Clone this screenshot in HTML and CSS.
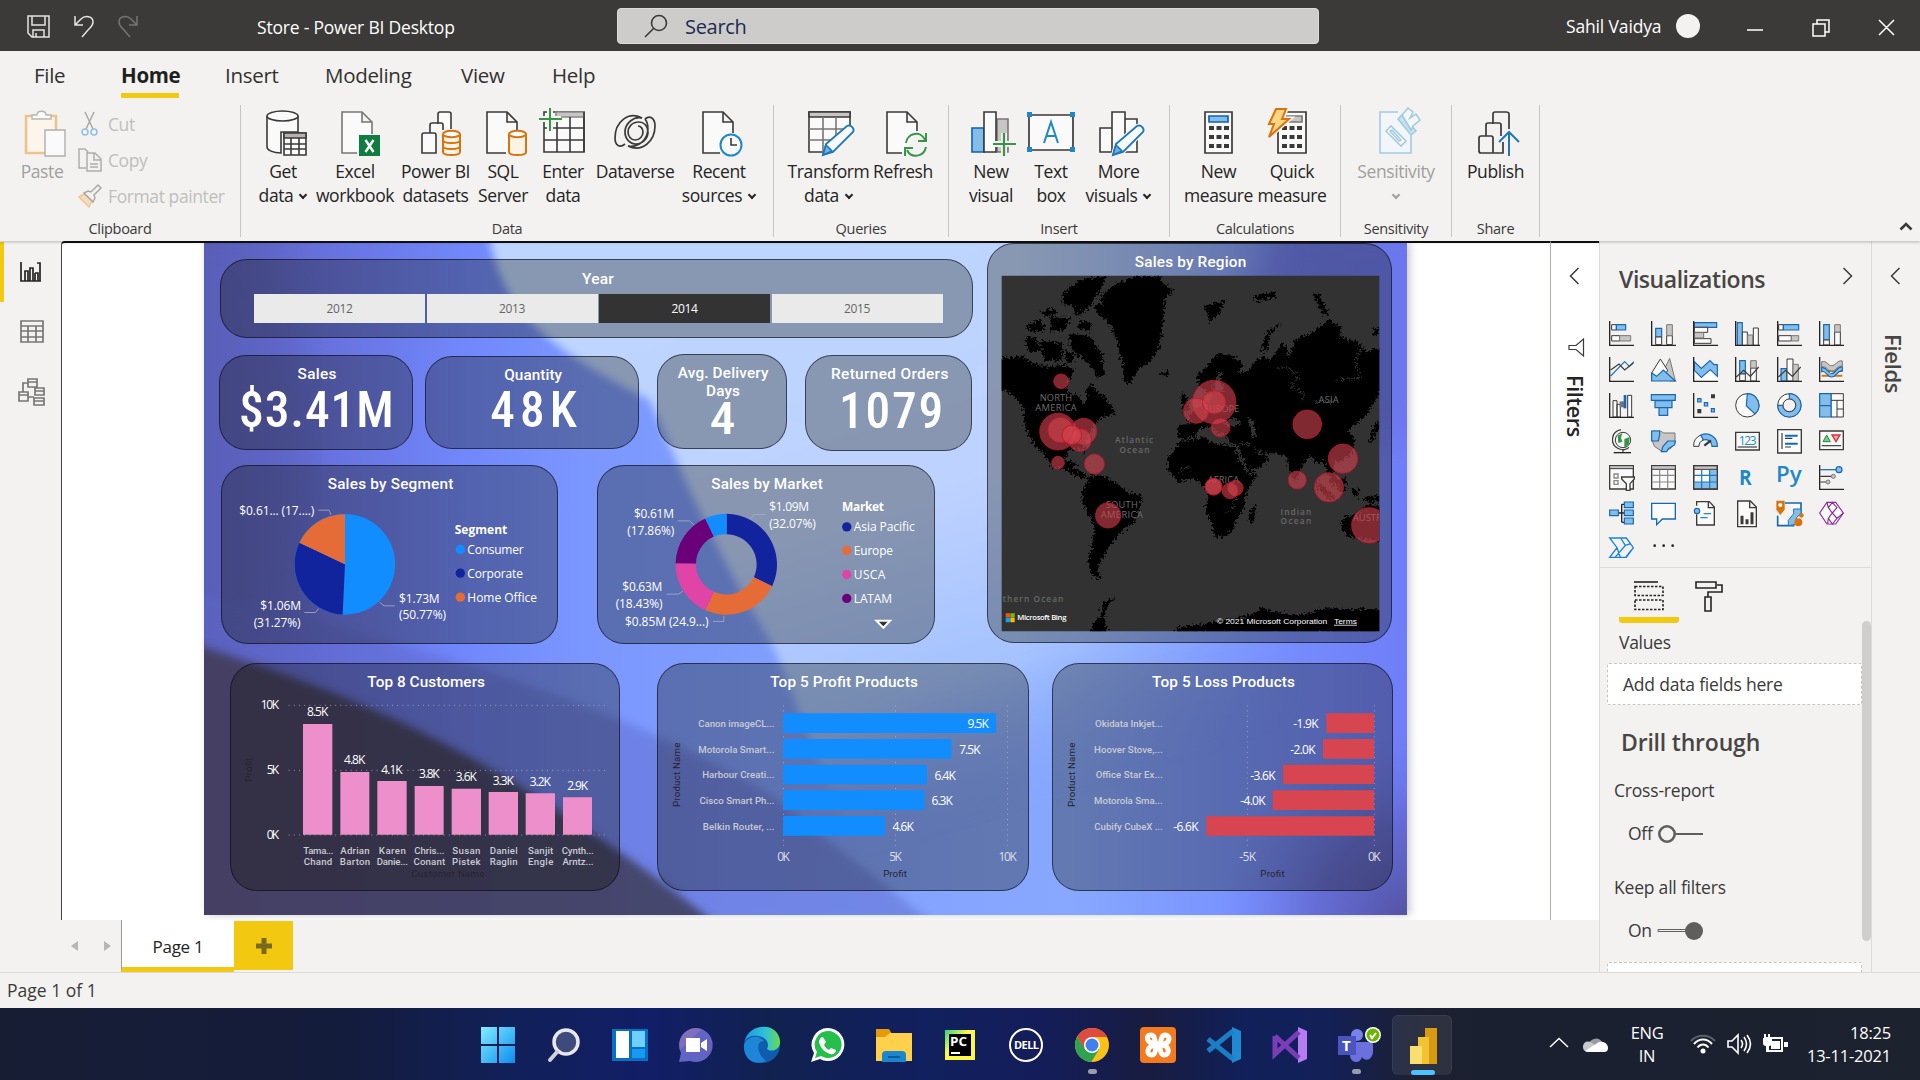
FILE: index.html
```html
<!DOCTYPE html>
<html lang="en">
<head>
<meta charset="utf-8">
<title>Store - Power BI Desktop</title>
<link rel="stylesheet" href="styles.css">
</head>
<body>
<div class="app">

<header class="titlebar">
  <svg class="quick" width="120" height="24" viewBox="0 0 120 24" fill="none" stroke="#e6e4e2" stroke-width="1.5">
    <path d="M1 1h21v21H5l-4-4zM5 1v9h13V1M6 22v-7h11v7M9 22v-4"/>
    <path d="M48 1v9h8M48 10l6-6c4-4 12-3 12 3 0 4-2 5-5 8l-6 7"/>
    <path stroke="#777573" d="M110 1v9h-8M110 10l-6-6c-4-4-12-3-12 3 0 4 2 5 5 8l6 7"/>
  </svg>
  <div class="doc-name">Store - Power BI Desktop</div>
  <div class="search">
    <svg width="24" height="24" viewBox="0 0 24 24" fill="none" stroke="#3b3a39" stroke-width="1.6"><circle cx="15" cy="9" r="7.5"/><path d="M9.5 14.5L1 23"/></svg>
    <span>Search</span>
  </div>
  <div class="user">Sahil Vaidya</div>
  <span class="avatar"></span>
  <svg class="winbtns" width="150" height="18" viewBox="0 0 150 18" fill="none" stroke="#fff" stroke-width="1.5"><path d="M1 11h16M67 5h12v12H67zM71 5V1h12v12h-4M133 1l15 15M148 1l-15 15"/></svg>
</header>

<nav class="tabs">
  <span class="t-file">File</span><span class="t-home">Home</span><span class="t-insert">Insert</span><span class="t-model">Modeling</span><span class="t-view">View</span><span class="t-help">Help</span>
</nav>

<section class="ribbon">
  <div class="group g-clip">
    <div class="btns">
      <div class="btn dim"><svg class="ico" viewBox="0 0 48 48" fill="#fafafa" stroke-width="1.4"><path stroke="#eec28e" stroke-width="2.6" fill="#fbf5ec" d="M8 8h30v37H8z"/><path stroke="#b8b6b4" d="M14 11V7h5c0-5 9-5 9 0h5v4z"/><path stroke="#b0aeac" d="M27 22h20v26H27z"/></svg>
        <span>Paste</span></div>
      <div class="cliplist">
        <div><svg width="26" height="26" viewBox="0 0 26 26" fill="none" stroke="#aaa8a6" stroke-width="1.5"><path d="M8 1l8 17M17 1L9 18"/><circle cx="8" cy="21" r="3" stroke="#8fc0e0"/><circle cx="17" cy="21" r="3" stroke="#8fc0e0"/></svg><span>Cut</span></div>
        <div><svg width="26" height="26" viewBox="0 0 26 26" fill="none" stroke="#b0aeac" stroke-width="1.5"><path d="M9 21H2V2h6l3 3M10 6h8l6 6v12H10zM17 6v7h7M13 17h8M13 20h8"/></svg><span>Copy</span></div>
        <div><svg width="26" height="26" viewBox="0 0 26 26" fill="none" stroke="#aaa8a6" stroke-width="1.5"><path fill="#f6dcbc" stroke="#efc797" d="M2 14l10 10 3-6-8-7z"/><path d="M7 10l9 9 2-4-1-3 7-7-3-3-7 7-3-1z"/></svg><span>Format painter</span></div>
      </div>
    </div>
    <div class="glabel">Clipboard</div>
  </div>

  <div class="group g-data">
    <div class="btns">
      <div class="btn"><svg class="ico" viewBox="0 0 48 48" fill="#fafafa" stroke="#3b3a39" stroke-width="1.6"><path d="M8 8v31c0 3 6 6 14 6V24h17V8"/><ellipse cx="23.500" cy="8" rx="15.500" ry="5"/><path d="M25 25h22v22H25z"/><path fill="#b5b3b1" d="M25 25h22v5H25z"/><path d="M25 36h22M25 41h22M32 30v17M40 30v17"/></svg><span>Get</span><span>data<i class="dd"></i></span></div>
      <div class="btn"><svg class="ico" viewBox="0 0 48 48" fill="#fafafa" stroke="#797775" stroke-width="1.6"><path d="M26 45H11V4h20l10 10v12M31 4v10h10"/><path stroke="none" fill="#107c41" d="M28 27h21v21H28z"/><path stroke="#fff" stroke-width="2.400" d="M34.500 32l8 12M42.500 32l-8 12"/></svg><span>Excel</span><span>workbook</span></div>
      <div class="btn"><svg class="ico" viewBox="0 0 48 48" fill="#fafafa" stroke="#3b3a39" stroke-width="1.600"><path d="M26 16V6q0-2 2-2h9q2 0 2 2v15M18 25V17q0-2 2-2h9q2 0 2 2v5M10 45V27q0-2 2-2h10q2 0 2 2v18z"/><path fill="#fdf3e6" stroke="#d9730d" stroke-width="2" d="M31 26v18c0 4 17 4 17 0V26"/><ellipse fill="#fff" stroke="#d9730d" stroke-width="2" cx="39.500" cy="26" rx="8.500" ry="3.200"/><path fill="none" stroke="#d9730d" stroke-width="2" d="M31 32c0 4 17 4 17 0M31 38c0 4 17 4 17 0"/></svg><span>Power BI</span><span>datasets</span></div>
      <div class="btn"><svg class="ico" viewBox="0 0 48 48" fill="#fafafa" stroke="#3b3a39" stroke-width="1.6"><path d="M27 45H8V4h20l10 10v8M28 4v10h10"/><path fill="#fdf3e6" stroke="#d9730d" stroke-width="2" d="M30 26v18c0 4 17 4 17 0V26"/><ellipse fill="#fff" stroke="#d9730d" stroke-width="2" cx="38.5" cy="26" rx="8.5" ry="3.200"/></svg><span>SQL</span><span>Server</span></div>
      <div class="btn"><svg class="ico" viewBox="0 0 48 48" fill="#fafafa" stroke="#3b3a39" stroke-width="1.6"><path d="M5 4h40v40H5z"/><path fill="#c8c6c4" stroke="#8a8886" d="M17 4h28v5H17z"/><path d="M5 20h40M5 32h40M18 9v35M31 9v35M45 4v40"/><path stroke="#f3f2f1" stroke-width="6" d="M11 0v23M0 11h22"/><path stroke="#359647" stroke-width="2" d="M11 0v23M0 11h23"/></svg><span>Enter</span><span>data</span></div>
      <div class="btn"><svg class="ico" viewBox="0 0 48 48" fill="none" stroke="#3b3a39" stroke-width="1.700"><path d="M31 10C17 3 4 14 4 30c0 8 5 10 10 6M17 38c14 7 27-5 27-20 0-8-5-11-10-7"/><path d="M31 10c-9-2-17 6-17 14 0 7 5 12 11 12 7 0 12-6 12-12 0-6-4-10-9-10-7 0-11 5-11 10 0 4 3 8 7 8 5 0 8-4 8-8 0-3-2-6-5-6M34 11c4 5 4 15-1 21-4 5-10 7-16 6"/></svg><span>Dataverse</span></div>
      <div class="btn"><svg class="ico" viewBox="0 0 48 48" fill="#fafafa" stroke="#3b3a39" stroke-width="1.6"><path d="M25 45H8V4h20l10 10v11M28 4v10h10"/><circle cx="36" cy="37" r="10.500" stroke="#1e88c9" stroke-width="2"/><path fill="none" d="M36 30v7h6"/></svg><span>Recent</span><span>sources<i class="dd"></i></span></div>
    </div>
    <div class="glabel">Data</div>
  </div>

  <div class="group g-query">
    <div class="btns">
      <div class="btn"><svg class="ico" viewBox="0 0 48 48" fill="#fafafa" stroke="#3b3a39" stroke-width="1.6"><path d="M20 44H4V4h41v16"/><path fill="#c8c6c4" d="M4 4h41v5H4z"/><path stroke="#797775" d="M4 21h36M4 32h24M18 9v35M31 9v18"/><path fill="#f7fbff" stroke="#1e78b8" stroke-width="1.800" d="M18 47l3-11 21-18c4-2 8 3 6 6L28 44z"/><path fill="#6db3ea" stroke="#1e78b8" d="M18 47l3-10 6 6z"/></svg><span>Transform</span><span>data<i class="dd"></i></span></div>
      <div class="btn"><svg class="ico" viewBox="0 0 48 48" fill="#fafafa" stroke="#3b3a39" stroke-width="1.6"><path d="M23 45H8V4h20l10 10v9M28 4v10h10"/><path fill="none" stroke="#359647" stroke-width="2" d="M27 35c1-10 15-13 19-3M47 25v8h-8M47 39c-2 10-15 12-19 3M26 48v-8h8"/></svg><span>Refresh</span></div>
    </div>
    <div class="glabel">Queries</div>
  </div>

  <div class="group g-insert">
    <div class="btns">
      <div class="btn"><svg class="ico" viewBox="0 0 48 48" fill="#fafafa" stroke="#3b3a39" stroke-width="1.6"><path fill="#c8c6c4" stroke="#797775" d="M30 11h11v33H30z"/><path fill="#83bdec" stroke="#0f62b0" d="M5 20h12v24H5z"/><path d="M17 4h12v40H17z"/><path stroke="#f3f2f1" stroke-width="6" d="M37 25v23M26 36h22"/><path stroke="#359647" stroke-width="2.200" d="M37 25v23M26 36h23"/></svg><span>New</span><span>visual</span></div>
      <div class="btn"><svg class="ico" viewBox="0 0 48 48" fill="#fafafa" stroke="#3b3a39" stroke-width="1.7"><path d="M2 7h44v35H2z"/><path fill="none" stroke="#1e88c9" stroke-width="2" d="M17 35l7-21 7 21M19.500 28h9"/><path stroke="none" fill="#1e88c9" d="M0 4h5v5H0zM43 4h5v5h-5zM0 39h5v5H0zM43 39h5v5h-5z"/></svg><span>Text</span><span>box</span></div>
      <div class="btn"><svg class="ico" viewBox="0 0 48 48" fill="#fafafa" stroke="#3b3a39" stroke-width="1.6"><path d="M5 20h12v24H5zM30 11h12v33H30zM17 4h13v40H17z"/><path fill="#f7fbff" stroke="#f3f2f1" stroke-width="4" d="M18 47l3-11 21-18c4-2 8 3 6 6L28 44z"/><path fill="#f7fbff" stroke="#1e78b8" stroke-width="1.8" d="M18 47l3-11 21-18c4-2 8 3 6 6L28 44z"/><path fill="#6db3ea" stroke="#1e78b8" d="M18 47l3-10 6 6z"/></svg><span>More</span><span>visuals<i class="dd"></i></span></div>
    </div>
    <div class="glabel">Insert</div>
  </div>

  <div class="group g-calc">
    <div class="btns">
      <div class="btn"><svg class="ico" viewBox="0 0 48 48" fill="#fafafa" stroke="#3b3a39" stroke-width="1.7"><path d="M10 4h27v41H10z"/><path fill="#83bdec" stroke="#0f62b0" d="M14 8h19v6H14z"/><path stroke-width="4" d="M14 20h5M21.500 20h5M29 20h5M14 29h5M21.5 29h5M29 29h5M14 38h5M21.500 38h5M29 38h5"/></svg><span>New</span><span>measure</span></div>
      <div class="btn"><svg class="ico" viewBox="0 0 48 48" fill="#fafafa" stroke="#3b3a39" stroke-width="1.7"><path d="M10 4h28v41H10z"/><path fill="#c8c6c4" stroke="#797775" d="M16 8h18v6H16z"/><path stroke-width="4" d="M14 20h5M21.500 20h5M29 20h5M14 29h5M21.500 29h5M29 29h5M14 38h5M21.500 38h5M29 38h5"/><path stroke="#f3f2f1" stroke-width="5" d="M8 1h10l-4 10h7L1 29l5-13H1z"/><path fill="#fcd683" stroke="#d9730d" stroke-width="2" d="M8 1h10l-4 10h7L1 29l5-13H1z"/></svg><span>Quick</span><span>measure</span></div>
    </div>
    <div class="glabel">Calculations</div>
  </div>

  <div class="group g-sens">
    <div class="btns">
      <div class="btn dim"><svg class="ico" viewBox="0 0 48 48" fill="#f3f6f8" stroke="#a3cbe2" stroke-width="1.6"><path d="M26 4H8v41h31V27"/><path fill="#fff" d="M14 23l5-5 15 15-5 5zM18 23l2-1 9 10-2 1z"/><path fill="#c9e0ee" d="M26 11l4-4 14 16-5 4z"/><path d="M30 7l6-7 5 4-3 6 6-4 4 6-7 6-2 4z"/></svg><span>Sensitivity</span><span><i class="dd"></i></span></div>
    </div>
    <div class="glabel">Sensitivity</div>
  </div>

  <div class="group g-share">
    <div class="btns">
      <div class="btn"><svg class="ico" viewBox="0 0 48 48" fill="none" stroke="#3b3a39" stroke-width="1.7"><path d="M22 16V6q0-2 2-2h11q3 0 3 2v15M15 28V17q0-2 2-2h11q2 0 2 2v11M22 45H10q-2 0-2-2V30q0-2 2-2h10q2 0 2 2v15h10V34"/><path stroke="#1e78b8" stroke-width="2" d="M38 48V25M28 34l10-10 10 10"/></svg><span>Publish</span></div>
    </div>
    <div class="glabel">Share</div>
  </div>
  <svg class="collapse" width="14" height="9" viewBox="0 0 14 9" fill="none" stroke="#3b3a39" stroke-width="2.600"><path d="M1.500 7.500L7 2l5.500 5.500"/></svg>
</section>

<main class="work">
  <aside class="rail">
    <div class="on"><svg width="24" height="24" viewBox="0 0 24 24" fill="none" stroke="#252423" stroke-width="1.700"><path d="M2 2v19h20M6 21V11h3v10M11 21V8h3v13M16 21V13M16 13h3v8M18 3h3v18"/></svg></div>
    <div><svg width="24" height="24" viewBox="0 0 24 24" fill="none" stroke="#797775" stroke-width="1.700"><path d="M1 1h22v21H1zM1 6h22M1 11h22M1 17h22M8 6v16M16 6v16"/></svg></div>
    <div><svg width="28" height="28" viewBox="0 0 28 28" fill="none" stroke="#797775" stroke-width="1.700"><path d="M10 1h9v8h-9zM10 4h9M1 14h9v9H1zM1 17h9M17 10h9v7h-9zM17 13h9M16 20h10v7H16zM16 23h10M10 5H5v9M10 19h6"/></svg></div>
  </aside>

  <section class="stage">
    <div class="report">
      <svg class="wall" viewBox="204 243 1203 671" preserveAspectRatio="none">
        <defs>
          <linearGradient id="base"><stop offset="0" stop-color="#595db4"/><stop offset=".1" stop-color="#6771de"/><stop offset=".22" stop-color="#7188fc"/><stop offset=".32" stop-color="#7b97ff"/><stop offset=".5" stop-color="#80a0ff"/><stop offset=".72" stop-color="#88a8ff"/><stop offset=".86" stop-color="#7892ff"/><stop offset="1" stop-color="#6f7ef8"/></linearGradient>
          <linearGradient id="sky" x1="0" y1="0" x2=".35" y2="1"><stop offset="0" stop-color="#bdd6ff"/><stop offset=".5" stop-color="#bed2ff"/><stop offset=".76" stop-color="#a4c2ff"/><stop offset=".95" stop-color="#86a6ff" stop-opacity="0"/></linearGradient>
          <linearGradient id="fade"><stop offset="0" stop-color="#fff"/><stop offset=".66" stop-color="#fff"/><stop offset="1" stop-color="#000"/></linearGradient>
          <mask id="m"><path fill="url(#fade)" d="M450 200h860v780H450z"/></mask>
          <linearGradient id="dusk"><stop offset="0" stop-color="#443f63"/><stop offset="1" stop-color="#45476f"/></linearGradient>
          <radialGradient id="corner" cx="1410" cy="920" r="190" gradientUnits="userSpaceOnUse"><stop offset="0" stop-color="#5353a0"/><stop offset=".5" stop-color="#5f61c4" stop-opacity=".7"/><stop offset="1" stop-color="#6b77e8" stop-opacity="0"/></radialGradient>
          <filter id="soft"><feGaussianBlur stdDeviation="4"/></filter>
          <filter id="softer"><feGaussianBlur stdDeviation="18"/></filter>
        </defs>
        <path fill="url(#base)" d="M204 243h1203v671H204z"/>
        <g mask="url(#m)"><path fill="url(#sky)" filter="url(#soft)" d="M488 230C500 300 530 340 650 400C680 470 720 560 770 640C800 700 820 790 900 920L1300 920L1300 230Z"/></g>
        <path fill="#6a74e8" opacity=".75" filter="url(#softer)" d="M1275 220C1250 290 1230 360 1300 440L1430 440L1430 220Z"/>
        <path fill="#5a60bc" opacity=".45" filter="url(#softer)" d="M190 230L250 230C310 330 320 430 300 640L190 640Z"/>
        <path fill="#5d66c8" opacity=".45" filter="url(#soft)" d="M190 590C400 640 620 700 780 800C840 850 880 880 930 920L190 920Z"/>
        <path fill="url(#dusk)" filter="url(#soft)" d="M190 642C330 686 420 725 520 785C590 830 650 870 715 922L190 922Z"/>
        <path fill="url(#corner)" d="M1200 700h207v214h-207z"/>
      </svg>

      <div class="upper">
        <div class="left">
          <div class="card year">
            <h3>Year</h3>
            <div class="slicer"><span>2012</span><span>2013</span><span class="sel">2014</span><span>2015</span></div>
          </div>
          <div class="kpis">
            <div class="card k1"><svg viewBox="58 346 580 284"><text class="ttl" x="293" y="419" textLength="116">Sales</text><text class="big" x="118" y="560" textLength="462">$3.41M</text></svg></div>
            <div class="card k2"><svg viewBox="673 351 643 277"><text class="ttl" x="911" y="423" textLength="174">Quantity</text><text class="big" x="869" y="563" textLength="260">48K</text></svg></div>
            <div class="card k3"><svg viewBox="202 343 390 286"><text class="ttl" x="264" y="414" textLength="273">Avg. Delivery</text><text class="ttl" x="349" y="468" textLength="102">Days</text><text class="big sm" x="360" y="585" textLength="77" lengthAdjust="spacingAndGlyphs">4</text></svg></div>
            <div class="card k4"><svg viewBox="646 346 500 287"><text class="ttl" x="724" y="417" textLength="351">Returned Orders</text><text class="big" x="748" y="563" textLength="312">1079</text></svg></div>
          </div>
          <div class="pies">
            <div class="card"><svg viewBox="63 675 1011 536">
              <text class="ttl" x="383" y="747" textLength="377">Sales by Segment</text>
              <circle cx="434.500" cy="972.500" r="151" fill="#118dff"/><path fill="#12239e" d="M435 972L428 1123A151 151 0 0 1 298 908Z"/><path fill="#e66c37" d="M435 972L298 908A151 151 0 0 1 435 822Z"/>
              <path class="lead" d="M355 810h32l6 14M539 1086l13 11h33M313 1117h34l9-12"/>
              <text class="lab" x="118" y="825" textLength="225">$0.61... (17....)</text>
              <text class="lab" x="181" y="1110" textLength="122">$1.06M</text><text class="lab" x="161" y="1160" textLength="141">(31.27%)</text>
              <text class="lab" x="597" y="1088" textLength="122">$1.73M</text><text class="lab" x="597" y="1137" textLength="141">(50.77%)</text>
              <text class="lab b" x="764" y="882" textLength="158">Segment</text>
              <circle cx="781" cy="928" r="14" fill="#118dff"/><circle cx="781" cy="999" r="14" fill="#12239e"/><circle cx="781" cy="1071" r="14" fill="#e66c37"/>
              <text class="lab" x="802" y="941" textLength="169">Consumer</text><text class="lab" x="802" y="1013" textLength="167">Corporate</text><text class="lab" x="802" y="1085" textLength="209">Home Office</text>
            </svg></div>
            <div class="card p2"><svg viewBox="22 675 1015 536">
              <text class="ttl" x="365" y="747" textLength="335">Sales by Market</text>
              <path fill="#12239e" d="M411 821A152 152 0 0 1 548 1038L493 1011A91 91 0 0 0 411 882Z"/>
              <path fill="#e66c37" d="M548 1038A152 152 0 0 1 347 1110L373 1055A91 91 0 0 0 493 1011Z"/>
              <path fill="#e044a7" d="M347 1110A152 152 0 0 1 258 969L319 970A91 91 0 0 0 373 1055Z"/>
              <path fill="#6b007b" d="M258 969A152 152 0 0 1 347 835L373 889A91 91 0 0 0 319 970Z"/>
              <path fill="#118dff" d="M347 835A152 152 0 0 1 411 821V882A91 91 0 0 0 373 889Z"/>
              <path class="lead" d="M264 842h36l13 12M527 823h-35l-9 14M231 1062h36l13-9M370 1144h33v-16"/>
              <text class="lab" x="133" y="834" textLength="120">$0.61M</text><text class="lab" x="113" y="884" textLength="141">(17.86%)</text>
              <text class="lab" x="539" y="812" textLength="120">$1.09M</text><text class="lab" x="539" y="864" textLength="140">(32.07%)</text>
              <text class="lab" x="98" y="1053" textLength="120">$0.63M</text><text class="lab" x="78" y="1103" textLength="141">(18.43%)</text>
              <text class="lab" x="106" y="1157" textLength="251">$0.85M (24.9...)</text>
              <text class="lab b" x="758" y="812" textLength="126">Market</text>
              <circle cx="772" cy="860" r="14" fill="#12239e"/><circle cx="772" cy="931" r="14" fill="#e66c37"/><circle cx="772" cy="1003" r="14" fill="#e044a7"/><circle cx="772" cy="1075" r="14" fill="#6b007b"/>
              <text class="lab" x="793" y="873" textLength="183">Asia Pacific</text><text class="lab" x="793" y="945" textLength="118">Europe</text><text class="lab" x="793" y="1017" textLength="95">USCA</text><text class="lab" x="793" y="1088" textLength="115">LATAM</text>
              <path d="M861 1142h41l-20 21z" fill="#333" stroke="#fff" stroke-width="6"/>
            </svg></div>
          </div>
        </div>

        <div class="card region"><svg viewBox="22 10 1214 1198">
          <defs>
            <filter id="rough" x="0" y="0" width="100%" height="100%" filterUnits="objectBoundingBox"><feTurbulence type="fractalNoise" baseFrequency=".13" numOctaves="3" seed="4"/><feDisplacementMap in="SourceGraphic" scale="28" xChannelSelector="R" yChannelSelector="G"/></filter>
            <clipPath id="mapclip"><path d="M66 108h1132v1065H66z"/></clipPath>
          </defs>
          <text class="ttl" x="465" y="81" textLength="334">Sales by Region</text>
          <path fill="#323232" d="M66 108h1132v1065H66z"/>
          <g clip-path="url(#mapclip)">
          <g filter="url(#rough)">
            <path d="M420 130L470 108H545L540 125L580 150L555 180L550 260L535 330L510 365L480 385L462 410L450 433L435 425L428 370L410 300L395 260L350 215L345 195L370 190L360 175L395 140Z"/>
            <path d="M50 355L130 350L150 365L200 380L250 375L285 385L278 405L262 420L262 455L300 470L312 495L320 480L318 450L335 430L352 455L372 465L395 500L410 520L370 530L345 550L330 580L315 610L318 640L305 625L270 630L255 655L262 668L282 662L280 685L310 700L330 712L320 718L290 708L255 690L215 678L190 640L165 615L145 580L133 550L133 510L115 480L85 455L50 445Z"/>
            <path d="M300 120L380 108L360 150L330 200L290 230L280 200L245 190L250 160ZM135 295L165 290L180 330L150 340ZM180 300L250 310L245 360L195 365ZM140 255L180 240L200 270L150 280ZM210 230L270 235L255 270L215 275ZM270 280L330 290L365 340L375 400L355 415L335 380L300 350L270 320ZM255 330L285 340L280 370L258 365ZM185 215L225 205L230 222L190 228ZM300 240L340 250L330 275L295 265Z"/>
            <path d="M330 712L350 705L390 715L420 735L440 755L488 770L480 800L465 845L430 870L400 905L385 920L375 945L360 965L355 990L362 1015L340 1010L325 975L335 920L345 860L330 830L308 785L310 750Z"/>
            <path d="M600 605L680 590L690 605L765 622L775 645L795 685L810 705L833 703L800 755L790 810L770 835L755 875L735 890L705 890L695 850L678 810L685 765L670 735L640 715L595 725L565 690L565 655ZM828 795L830 815L818 850L805 845L810 815ZM770 605L830 625L868 655L845 680L805 695L790 665Z"/>
            <path d="M595 590V555L635 552L622 530L650 505L680 490L700 470L660 440L650 410L690 370L715 340L760 348L792 375L770 400L800 395L830 360L855 345L870 365L905 310L918 320L925 355L945 300L1000 275L1045 240L1085 262L1080 290L1130 305L1160 335L1210 320V440L1180 490L1165 520L1148 535L1130 550L1105 568L1125 600L1110 645L1080 665L1062 660L1060 690L1075 720L1058 740L1045 700L1030 665L1010 670L990 645L960 690L950 725L930 700L920 650L890 640L840 640L800 605L760 615L740 590L715 578L690 560L660 565L645 588L610 600Z"/>
            <path d="M605 455L620 470L634 515L608 512ZM540 398L570 395L560 412ZM905 250L870 270L850 300L846 340L862 330L870 290ZM675 200L735 182L715 225L690 245ZM1000 165L1015 160L1045 220L1030 225ZM820 170L885 155L890 170L830 185ZM1085 870L1088 835L1130 820L1165 795L1210 800V905L1110 890ZM1010 720L1070 775L1050 780L1015 745ZM1070 720L1100 715L1095 755L1075 755ZM1110 745L1135 750L1130 775ZM1150 770L1198 765V785L1160 785ZM1165 610L1180 560L1198 540V560L1180 600ZM1180 265h20v20h-20ZM250 668L300 672L290 680Z"/>
            <path d="M580 1180L590 1162L700 1148L800 1128L850 1102L880 1115L960 1125L1040 1105L1210 1108V1180ZM330 1180L345 1145L362 1130L368 1090L405 1072L378 1105L374 1140L384 1180Z"/>
            <path fill="#323232" d="M700 455L705 420L718 395L728 400L718 425L735 440L728 460ZM735 545L765 535L785 550L760 560L740 560ZM805 535L820 540L830 590L815 590ZM765 625L772 625L805 690L798 695ZM820 622L850 640L840 645Z"/>
            <path fill="none" stroke="#323232" stroke-width="3" d="M890 385L920 380L960 410L930 440L970 460L970 485M1065 420L1140 415L1125 370L1140 325M600 700L615 680L635 690M735 820L760 808L768 770M1000 485H1070"/>
          </g>
          <g class="geo"><text x="180" y="483" textLength="97">NORTH</text><text x="167" y="514" textLength="124">AMERICA</text><text x="1016" y="489" textLength="60">ASIA</text><text x="672" y="517" textLength="106">EUROPE</text><text x="684" y="728" textLength="94">AFRICA</text><text x="378" y="805" textLength="96">SOUTH</text><text x="363" y="835" textLength="126">AMERICA</text><text x="1119" y="842">AUSTRALIA</text></g>
          <g class="geo sea"><text x="406" y="610" textLength="114">Atlantic</text><text x="419" y="638" textLength="90">Ocean</text><text x="902" y="825" textLength="92">Indian</text><text x="902" y="852" textLength="92">Ocean</text><text x="69" y="1086" textLength="182">thern Ocean</text></g>
          <g class="bub"><circle cx="244" cy="424" r="22"/><circle cx="235" cy="575" r="55"/><circle cx="312" cy="574" r="39"/><circle cx="301" cy="600" r="34"/><circle cx="242" cy="570" r="38"/><circle cx="276" cy="585" r="29"/><circle cx="235" cy="668" r="19"/><circle cx="344" cy="672" r="30"/><circle cx="385" cy="826" r="38"/><circle cx="703" cy="486" r="65"/><circle cx="649" cy="512" r="38"/><circle cx="703" cy="487" r="35"/><circle cx="722" cy="563" r="28"/><circle cx="701" cy="740" r="25"/><circle cx="701" cy="740" r="25"/><circle cx="767" cy="744" r="23"/><circle cx="751" cy="752" r="24"/><circle cx="982" cy="553" r="43"/><circle cx="1089" cy="656" r="44"/><circle cx="952" cy="720" r="27"/><circle cx="1047" cy="742" r="44"/><circle cx="1168" cy="856" r="53"/></g>
          <path fill="#f25022" d="M78 1119h13v13H78z"/><path fill="#7fba00" d="M92 1119h13v13H92z"/><path fill="#00a4ef" d="M78 1133h13v13H78z"/><path fill="#ffb900" d="M92 1133h13v13H92z"/>
          <text class="cr" x="113" y="1141" textLength="147">Microsoft Bing</text><text class="cr lib" x="711" y="1151" textLength="331" lengthAdjust="spacingAndGlyphs">© 2021 Microsoft Corporation</text><text class="cr lib" x="1062" y="1151" textLength="69" lengthAdjust="spacingAndGlyphs" text-decoration="underline">Terms</text>
          </g>
        </svg></div>
      </div>

      <div class="lower">
        <div class="card c1"><svg viewBox="89 54 1170 684">
          <text class="ttl" x="501" y="125" textLength="353">Top 8 Customers</text>
          <path class="grid" d="M265 181H1216M265 376H1216M265 570H1216"/>
          <text class="lab" x="181" y="193" textLength="55">10K</text><text class="lab" x="199" y="388" textLength="37">5K</text><text class="lab" x="199" y="582" textLength="37">0K</text>
          <path fill="#ec8fcb" d="M308 237h88v332h-88zM420 381h87v188h-87zM531 408h88v161h-88zM643 423h87v146h-87zM754 431h88v138h-88zM865 441h88v128h-88zM976 445h88v124h-88zM1088 457h87v112h-87z"/>
          <g class="lab mid"><text x="352" y="213" textLength="64">8.5K</text><text x="463" y="357" textLength="64">4.8K</text><text x="575" y="387" textLength="64">4.1K</text><text x="687" y="399" textLength="62">3.8K</text><text x="798" y="408" textLength="63">3.6K</text><text x="909" y="420" textLength="63">3.3K</text><text x="1020" y="423" textLength="63">3.2K</text><text x="1132" y="435" textLength="63">2.9K</text></g>
          <g class="din mid"><text x="354" y="627" textLength="90">Tama...</text><text x="353" y="660" textLength="85">Chand</text><text x="464" y="627" textLength="88">Adrian</text><text x="464" y="660" textLength="91">Barton</text><text x="576" y="627" textLength="81">Karen</text><text x="576" y="660" textLength="94">Danie...</text><text x="687" y="627" textLength="91">Chris...</text><text x="687" y="660" textLength="95">Conant</text><text x="798" y="627" textLength="84">Susan</text><text x="798" y="660" textLength="86">Pistek</text><text x="910" y="627" textLength="84">Daniel</text><text x="910" y="660" textLength="84">Raglin</text><text x="1021" y="627" textLength="76">Sanjit</text><text x="1021" y="660" textLength="76">Engle</text><text x="1132" y="627" textLength="96">Cynth...</text><text x="1133" y="660" textLength="93">Arntz...</text></g>
          <text class="axis" x="633" y="696" textLength="219">Customer Name</text><text class="axis" transform="translate(155 410) rotate(-90)" textLength="72">Profit</text>
        </svg></div>

        <div class="card c2"><svg viewBox="82 54 1115 684">
          <text class="ttl" x="421" y="125" textLength="443">Top 5 Profit Products</text>
          <path class="grid" d="M461 181V608M797 181V608M1133 181V608"/>
          <path fill="#118dff" d="M460 205h639v59H460zM460 282h505v59H460zM460 359h431v59H460zM460 436h424v59H460zM460 513h305v59H460z"/>
          <g class="din end"><text x="434" y="246" textLength="229">Canon imageCL...</text><text x="434" y="324" textLength="229">Motorola Smart...</text><text x="434" y="399" textLength="217">Harbour Creati...</text><text x="434" y="477" textLength="225">Cisco Smart Ph...</text><text x="434" y="555" textLength="215">Belkin Router, ...</text></g>
          <g class="lab"><text x="1013" y="249" textLength="64">9.5K</text><text x="988" y="327" textLength="64">7.5K</text><text x="914" y="405" textLength="64">6.4K</text><text x="905" y="480" textLength="64">6.3K</text><text x="788" y="558" textLength="64">4.6K</text></g>
          <g class="lab dimmer"><text x="442" y="648" textLength="38">0K</text><text x="778" y="648" textLength="38">5K</text><text x="1106" y="648" textLength="55">10K</text></g>
          <text class="axis" x="760" y="696" textLength="71">Profit</text><text class="axis" transform="translate(150 486) rotate(-90)" textLength="193">Product Name</text>
        </svg></div>

        <div class="card c3"><svg viewBox="65 54 1021 684">
          <text class="ttl" x="364" y="125" textLength="429">Top 5 Loss Products</text>
          <path class="grid" d="M650 181V608M1031 181V608"/>
          <path fill="#d64550" d="M887 205h143v59H887zM877 282h153v59H877zM757 359h273v58H757zM726 436h304v59H726zM527 514h503v58H527z"/>
          <g class="din end"><text x="396" y="246" textLength="203">Okidata Inkjet...</text><text x="396" y="324" textLength="206">Hoover Stove,...</text><text x="396" y="399" textLength="201">Office Star Ex...</text><text x="396" y="477" textLength="206">Motorola Sma...</text><text x="396" y="555" textLength="205">Cubify CubeX ...</text></g>
          <g class="lab"><text x="788" y="249" textLength="76">-1.9K</text><text x="779" y="327" textLength="76">-2.0K</text><text x="659" y="405" textLength="76">-3.6K</text><text x="629" y="480" textLength="76">-4.0K</text><text x="428" y="558" textLength="76">-6.6K</text></g>
          <g class="lab dimmer"><text x="626" y="648" textLength="50">-5K</text><text x="1012" y="648" textLength="38">0K</text></g>
          <text class="axis" x="689" y="696" textLength="73">Profit</text><text class="axis" transform="translate(132 486) rotate(-90)" textLength="193">Product Name</text>
        </svg></div>
      </div>
    </div>
  </section>

  <aside class="filters">
    <svg width="11" height="18" viewBox="0 0 11 18" fill="none" stroke="#3b3a39" stroke-width="1.5"><path d="M9.500 1L1.500 9l8 8"/></svg>
    <svg class="funnel" width="17" height="19" viewBox="0 0 17 19" fill="none" stroke="#3b3a39" stroke-width="1.200"><path d="M15.500 1v17L8 11.500H1v-4h7z"/></svg>
    <b>Filters</b>
  </aside>

  <section class="viz">
    <div class="vhead"><h2>Visualizations</h2><svg width="11" height="18" viewBox="0 0 11 18" fill="none" stroke="#3b3a39" stroke-width="1.500"><path d="M1.500 1l8 8-8 8"/></svg></div>
    <div class="vgrid">
      <svg viewBox="0 0 75 75"><path class="n" d="M8 11h14v16H8zM8 44h24v16H8z"/><path class="u" d="M22 11h28v16H22z"/><path class="g" d="M32 44h33v16H32z"/><path class="k" d="M2 0v73h73"/></svg>
      <svg viewBox="0 0 75 75"><path class="u" d="M14 22h18v26H14z"/><path class="n" d="M14 48h18v23H14zM47 44h17v27H47z"/><path class="g" d="M47 11h17v33H47z"/><path class="k" d="M2 0v73h73"/></svg>
      <svg viewBox="0 0 75 75"><path class="u" d="M4 5h67v14H4z"/><path class="n" d="M4 19h40v15H4zM4 53h50v14H4z"/><path class="g" d="M4 35h28v16H4z"/><path class="k" d="M2 0v73h73"/></svg>
      <svg viewBox="0 0 75 75"><path class="u" d="M7 5h15v68H7z"/><path class="n" d="M22 33h15v40H22zM55 21h15v52H55z"/><path class="g" d="M38 42h15v31H38z"/><path class="k" d="M2 0v73h73"/></svg>
      <svg viewBox="0 0 75 75"><path class="n" d="M5 11h14v16H5zM5 44h38v16H5z"/><path class="u" d="M19 11h46v16H19z"/><path class="g" d="M43 44h22v16H43z"/><path class="k" d="M2 0v73h73"/></svg>
      <svg viewBox="0 0 75 75"><path class="u" d="M14 11h17v46H14z"/><path class="n" d="M14 57h17v15H14zM47 33h17v39H47z"/><path class="g" d="M47 11h17v22H47z"/><path class="k" d="M2 0v73h73"/></svg>

      <svg viewBox="0 0 75 75"><path class="l blue" d="M5 57L47 14l14 14 14-14"/><path class="l" d="M5 39L30 21l17 18L73 18"/><path class="k" d="M2 0v73h73"/></svg>
      <svg viewBox="0 0 75 75"><path class="g" d="M56 4L36 45l20 27h17z"/><path class="n" d="M2 48L28 6l22 34-20 30H2z"/><path class="u" d="M2 48l15 10 20-19 36 33H2z"/></svg>
      <svg viewBox="0 0 75 75"><path fill="#fff" d="M4 40L24 60l26-22 25 20v15H4z"/><path class="u" d="M4 14l21 20 26-23 12 12h10v35L52 38 25 61 4 40z"/><path class="k" d="M2 0v73h73"/></svg>
      <svg viewBox="0 0 75 75"><path class="u" d="M14 11h17v40H14z"/><path class="n" d="M14 51h17v20H14zM47 33h17v39H47z"/><path class="g" d="M47 11h17v22H47z"/><path class="l" d="M4 60l22-20 20 18 25-28"/><path class="k" d="M2 0v73h73"/></svg>
      <svg viewBox="0 0 75 75"><path class="u" d="M12 35h18v37H12z"/><path class="n" d="M30 6h18v66H30z"/><path class="g" d="M48 22h16v50H48z"/><path class="l" d="M4 60l22-20 20 18 25-28"/><path class="k" d="M2 0v73h73"/></svg>
      <svg viewBox="0 0 75 75"><path fill="none" stroke="#d9730d" stroke-width="6" d="M8 42h62M8 56h62"/><path fill="#c8c6c4" stroke="#797775" stroke-width="3" d="M8 14c16-4 18 12 30 12s18-18 32-14v16c-14-4-18 14-32 14S22 24 8 30z"/><path class="u" d="M8 32c16-4 18 18 30 18s18-24 32-20v12c-14-4-18 18-32 18S22 40 8 44z"/><path class="k" d="M2 0v73h73"/></svg>

      <svg viewBox="0 0 75 75"><path class="n" d="M12 23h12v49H12zM24 34h10v38H24zM56 7h12v65H56z"/><path fill="#797775" d="M32 25h14v18H32z"/><path fill="#1668b0" d="M44 6h8v40h-8z"/><path class="k" d="M2 0v73h73"/></svg>
      <svg viewBox="0 0 75 75"><path class="u" d="M1 5h72v17H1zM12 23h51v21H12zM24 44h26v23H24z"/></svg>
      <svg viewBox="0 0 75 75"><path fill="#3b3a39" d="M54 4h12v12H54zM13 48h12v13H13z"/><path class="u" d="M14 17h10v10H14zM34 29h10v10H34zM55 47h9v10h-9z"/><path class="k" d="M2 0v73h73"/></svg>
      <svg viewBox="0 0 75 75"><circle class="n" cx="37" cy="37" r="35"/><path class="u" d="M37 2a35 35 0 0 1 23 61L34 38z"/></svg>
      <svg viewBox="0 0 75 75"><circle class="n" cx="37" cy="37" r="35"/><path class="u" d="M37 2A35 35 0 1 1 2 37h16a19 19 0 1 0 19-19z"/><circle cx="37" cy="37" r="19" fill="#f3f2f1" stroke="#3b3a39" stroke-width="3"/></svg>
      <svg viewBox="0 0 75 75"><path class="n" d="M36 2h37v70H36zM36 22h37M54 22v50M54 48h19"/><path class="u" d="M2 2h34v36H2zM2 38h34v34H2z"/></svg>

      <svg viewBox="0 0 75 75"><circle cx="42" cy="33" r="23" fill="#f8fff8" stroke="#3b3a39" stroke-width="3"/><path fill="#359647" d="M26 20l14-8-4 14 4 12-12 4zM46 30l16-6-2 22-14 10z"/><path class="l" d="M36 2C4 8 4 46 26 58c14 8 28 3 34-3M42 60v10"/><path class="k" d="M14 71h52"/></svg>
      <svg viewBox="0 0 75 75"><path class="g" d="M2 6h26l10 6h34v30L60 58 34 68 10 52 2 30z"/><path class="u" d="M2 6h24v12l-4 18H2zM36 52l14-16h23l-2 12-18 10-6 10-16 0z"/></svg>
      <svg viewBox="0 0 75 75"><path class="n" d="M2 52a35 35 0 0 1 22-34l7 15a20 20 0 0 0-13 19z"/><path class="u" d="M24 18a35 35 0 0 1 49 34H57a20 20 0 0 0-26-19z"/><path stroke="#3b3a39" stroke-width="7" d="M34 50l20-16"/></svg>
      <svg viewBox="0 0 75 75"><path class="n thick" d="M2 10h71v53H2z"/><text x="11" y="49" font-size="36" fill="#1e88c9" textLength="54">123</text><path class="l" d="M8 54h58"/></svg>
      <svg viewBox="0 0 75 75"><path class="n thick" d="M2 2h71v70H2z"/><path class="l" d="M15 12v48M24 28h22M24 54h18"/><path stroke="#0f6cbd" stroke-width="6" d="M24 20h38M24 44h38"/></svg>
      <svg viewBox="0 0 75 75"><path class="n thick" d="M2 6h71v56H2z"/><path fill="#6fcf88" stroke="#2a8a3c" stroke-width="3" d="M12 38l11-20 11 20z"/><path fill="#f6a0a6" stroke="#d13438" stroke-width="4" d="M39 18h24L51 38z"/><path class="l" d="M8 50h58"/></svg>

      <svg viewBox="0 0 75 75"><path class="n thick" d="M2 2h71v70H2z"/><path fill="#c8c6c4" stroke="#3b3a39" stroke-width="3" d="M2 2h71v9H2z"/><path fill="none" stroke="#8a8886" stroke-width="4" d="M15 27h12v12H15zM15 47h12v11H15z"/><path class="n thick" d="M38 36h38v6L63 56v20H52V56L38 42z"/></svg>
      <svg viewBox="0 0 75 75"><path class="n thick" d="M2 2h71v70H2z"/><path fill="#c8c6c4" stroke="#3b3a39" stroke-width="3" d="M2 2h71v11H2z"/><path class="l grey" d="M4 31h67M4 51h67M26 14v57M50 14v57"/></svg>
      <svg viewBox="0 0 75 75"><path class="n thick" d="M2 2h71v70H2z"/><path fill="#83bdec" d="M48 14h24v57H3V51h45z"/><path fill="#c8c6c4" stroke="#3b3a39" stroke-width="3" d="M2 2h71v11H2z"/><path class="l blue" d="M4 31h67M4 51h67M26 14v57M50 14v57"/><path fill="none" stroke="#3b3a39" stroke-width="4" d="M2 2h71v70H2z"/></svg>
      <svg viewBox="0 0 75 75"><text x="12" y="60" font-size="66" font-weight="700" fill="#1e88c9" textLength="38" lengthAdjust="spacingAndGlyphs">R</text></svg>
      <svg viewBox="0 0 75 75"><text x="-3" y="52" font-size="66" font-weight="600" fill="#1e88c9" textLength="77" lengthAdjust="spacingAndGlyphs">Py</text></svg>
      <svg viewBox="0 0 75 75"><path fill="none" stroke="#1e78b8" stroke-width="4" d="M4 14h50"/><circle class="u" cx="60" cy="14" r="9"/><path class="l" d="M4 34h34M4 51h18"/><circle class="g" cx="43" cy="34" r="6"/><circle class="g" cx="27" cy="51" r="6"/><path class="k" d="M2 0v73h73"/></svg>

      <svg viewBox="0 0 75 75"><path class="k" d="M28 36h20M38 10v54M38 10h12M38 64h12"/><path class="u" d="M2 27h26v17H2zM46 3h27v17H46zM46 27h27v17H46zM46 51h27v18H46z"/></svg>
      <svg viewBox="0 0 75 75"><path fill="#fafafa" stroke="#1668b0" stroke-width="4" d="M2 7h71v47H34L17 71V54H2z"/></svg>
      <svg viewBox="0 0 75 75"><path class="n thick" d="M11 14V2h38l15 16v54H11V40M46 2v18h18"/><circle class="u" cx="12" cy="30" r="8"/><path stroke="#1e88c9" stroke-width="4" d="M32 38h22M22 50h22"/></svg>
      <svg viewBox="0 0 75 75"><path class="n thick" d="M8 0h38l18 18v59H8zM44 2v18h20"/><path stroke="#3b3a39" stroke-width="9" d="M21 70V44M36 70V55M51 70V34"/></svg>
      <svg viewBox="0 0 75 75"><path fill="#fafafa" stroke="#1668b0" stroke-width="5" d="M24 6h48v30M2 44v30h50"/><path fill="#83bdec" stroke="#1e78b8" stroke-width="3" d="M34 74V58l16-20V24h22v14L58 50v20z"/><path fill="#d9730d" d="M-2-1h25v27L10 42-2 26z"/><circle cx="10" cy="12" r="6" fill="#fff"/><circle cx="64" cy="64" r="12" fill="#d9730d"/><circle cx="73" cy="43" r="7" fill="#d9730d"/></svg>
      <svg viewBox="0 0 75 75" fill="#fff" stroke="#8e2a9c" stroke-width="3.500"><path d="M24 4h26l23 32-23 33H24L2 36z"/><path d="M40 4L28 20l12 16 14-16zM54 20L40 36l14 16 19-16M28 52l12-16 14 16-14 17zM28 52L26 68M28 20L24 4" fill="none"/></svg>

      <svg viewBox="0 0 75 75" fill="none" stroke="#1a83dc" stroke-width="4"><path d="M2 3h50l21 29-21 29H2l22-29zM35 3l14 22L18 61M49 25L66 20M66 40L50 61M24 32L34 61"/></svg>
      <svg viewBox="0 0 75 75" fill="#252423"><circle cx="11" cy="26" r="4"/><circle cx="38" cy="26" r="4"/><circle cx="65" cy="26" r="4"/></svg>
    </div>
    <div class="vbody">
      <div class="vtabs">
        <div class="act"><svg width="30" height="30" viewBox="0 0 30 30" fill="none" stroke="#252423" stroke-width="1.600"><path d="M0 1h24"/><path stroke-dasharray="2.500 1.500" d="M1 5.500h28v9H1zM1 19h28v9.500H1z"/></svg></div>
        <div><svg width="29" height="31" viewBox="0 0 29 31" fill="none" stroke="#252423" stroke-width="1.600"><path d="M1 1h20v6H1zM22 4h5v7H13v5M10 16h6v14h-6z"/></svg></div>
      </div>
      <div class="vlabel">Values</div>
      <div class="well">Add data fields here</div>
      <h2 class="drill">Drill through</h2>
      <div class="vrow r1">Cross-report</div>
      <div class="tog t1"><span>Off</span><svg width="46" height="18" viewBox="0 0 46 18" fill="none" stroke="#605e5c"><path d="M17 8.500h28"/><circle cx="9" cy="9" r="7.700" stroke-width="2.600"/><path d="M18 9.500h27"/></svg></div>
      <div class="vrow r2">Keep all filters</div>
      <div class="tog t2"><span>On</span><svg width="46" height="18" viewBox="0 0 46 18" fill="none" stroke="#605e5c"><path d="M0 7.500h28v2H0z"/><circle cx="36" cy="9" r="9" fill="#605e5c" stroke="none"/></svg></div>
      <div class="well cut"></div>
      <i class="scroll"></i>
    </div>
  </section>

  <aside class="fields">
    <svg width="11" height="18" viewBox="0 0 11 18" fill="none" stroke="#3b3a39" stroke-width="1.500"><path d="M9.500 1L1.500 9l8 8"/></svg>
    <b>Fields</b>
  </aside>

  <div class="pages">
    <svg width="51" height="12" viewBox="0 0 51 12" fill="#b8b6b4"><path d="M8 1v10L1 6zM34 1v10l7-5z"/></svg>
    <div class="page">Page 1</div>
    <div class="add"><svg width="18" height="18" viewBox="0 0 18 18" stroke="#7a6a1c" stroke-width="5"><path d="M9 1v16M1 9h16"/></svg></div>
  </div>
</main>

<div class="status">Page 1 of 1</div>

<footer class="taskbar">
  <div class="apps">
    <div><svg viewBox="0 0 36 36"><defs><linearGradient id="w" x2="1" y2="1"><stop stop-color="#83ecff"/><stop offset="1" stop-color="#0c8df0"/></linearGradient></defs><path fill="url(#w)" d="M1 0h16v17H1zM19 0h16v17H19zM1 19h16v17H1zM19 19h16v17H19z"/></svg></div>
    <div><svg viewBox="0 0 36 36"><circle cx="20" cy="15" r="12" fill="#3d4a7c" stroke="#e8e8ea" stroke-width="3.500"/><path stroke="#d0d2d6" stroke-width="4" stroke-linecap="round" d="M11 25l-7 8"/></svg></div>
    <div><svg viewBox="0 0 36 36"><path fill="#0a6fc4" d="M0 2h36v32H0z"/><path fill="#fff" d="M4 4h13v27H4z"/><path fill="#6fd0ff" d="M20 4h13v16H20z"/><path fill="#169af0" d="M20 22h13v9H20z"/></svg></div>
    <div><svg viewBox="0 0 36 36"><path fill="#6264c4" d="M18 1a17 17 0 1 1-6 33L1 35l2-9A17 17 0 0 1 18 1z"/><path fill="#8f74b8" d="M18 1a17 17 0 0 0-16 22L24 2z" opacity=".7"/><path fill="#fff" d="M8 11h14v14H8zM23 16l6-4v12l-6-4z"/></svg></div>
    <div><svg viewBox="0 0 36 36"><defs><linearGradient id="e"><stop stop-color="#1f9ae0"/><stop offset=".6" stop-color="#2fc3d6"/><stop offset="1" stop-color="#6bdc4a"/></linearGradient></defs><circle cx="18" cy="18" r="18" fill="#0f5cac"/><path fill="#1d86d8" d="M0 18c2-8 14-12 20-4-8 0-8 12 2 20C8 40-1 30 0 18z"/><path fill="url(#e)" d="M1 14C5-4 34-6 36 14c1 8-8 12-13 8 3-6-1-12-9-13C8 8 3 10 1 14z"/></svg></div>
    <div><svg viewBox="0 0 36 36"><path fill="#fff" d="M18 1a16.500 16.500 0 1 1-8 31L1 35l3-9A16.500 16.500 0 0 1 18 1z"/><path fill="#25c04a" d="M18 4a13.500 13.500 0 1 1-7 25l-6 2 2-6A13.500 13.500 0 0 1 18 4z"/><path fill="#fff" d="M13 10l3 5-2 3c1 2 3 4 5 5l2-2 5 2c0 3-3 5-6 4-6-2-10-7-11-12 0-3 2-5 4-5z"/></svg></div>
    <div><svg viewBox="0 0 36 36"><path fill="#e59a0a" d="M0 2h13l3 5h-3v6H0z"/><path fill="#ffd04a" d="M0 10h9l5-4h22v28H0z"/><path fill="#1a86d0" d="M6 35V28q0-4 4-4h16q4 0 4 4v7z"/><path stroke="#0b5a9c" stroke-width="2" d="M12 30h12"/></svg></div>
    <div><svg viewBox="0 0 36 36"><defs><linearGradient id="py" x2="1" y2="1"><stop stop-color="#21d789"/><stop offset=".4" stop-color="#fcf84a"/></linearGradient></defs><path fill="url(#py)" d="M3 3h30v30H3z"/><path d="M7 7h22v22H7z"/><text x="8" y="19" font-size="13" font-weight="700" fill="#fff" textLength="17" lengthAdjust="spacingAndGlyphs">PC</text><path stroke="#fff" stroke-width="2" d="M9 26h9"/></svg></div>
    <div><svg viewBox="0 0 36 36"><circle cx="18" cy="18" r="16" fill="none" stroke="#fff" stroke-width="2"/><text x="6" y="22" font-size="11" font-weight="700" fill="#fff" textLength="25">DELL</text></svg></div>
    <div class="run"><svg viewBox="0 0 36 36"><circle cx="18" cy="18" r="17" fill="#fbc116"/><path fill="#df4b3d" d="M3.500 9.500a17 17 0 0 1 29.500 0L33 10H18l-8 12z"/><path fill="#2fa24f" d="M3.300 9.500a17 17 0 0 0 14 25.500l8-13-14 1z"/><circle cx="18" cy="18" r="8" fill="#fff"/><circle cx="18" cy="18" r="6.500" fill="#3f80ee"/></svg></div>
    <div><svg viewBox="0 0 36 36"><rect width="36" height="36" rx="4" fill="#f47a20"/><path fill="none" stroke="#fff" stroke-width="5" stroke-linecap="round" stroke-linejoin="round" d="M16 17C6 16 5 8 11 8c6 0 2 9 7 9s1-9 7-9c6 0 5 8-1 9M16 18c-10 1-10 10-4 10 5 0 2-8 6-8s1 8 6 8c6 0 6-9-2-10"/></svg></div>
    <div><svg viewBox="0 0 36 36"><path fill="#1f8ad2" d="M26 0l9 4v28l-9 4z"/><path fill="none" stroke="#1b7ec4" stroke-width="5" d="M2 12l25 20M2 24L27 4"/></svg></div>
    <div><svg viewBox="0 0 36 36"><path fill="#b67cf0" d="M26 0l9 4v28l-9 4z"/><path fill="none" stroke="#7a3db8" stroke-width="5" d="M3 9v18L27 5M3 9l24 22"/></svg></div>
    <div class="run"><svg viewBox="0 0 36 36"><circle cx="19" cy="8" r="6" fill="#7b83eb"/><path fill="#6b70dc" d="M12 15h20q3 0 3 3v6c0 9-8 11-11 6-2 8-12 6-12-2z"/><path fill="#4b53bc" d="M0 9h18v19H0z"/><text x="4" y="24" font-size="15" font-weight="700" fill="#fff">T</text><circle cx="35" cy="8" r="8" fill="#fff"/><circle cx="35" cy="8" r="6.500" fill="#6bb700"/><path fill="none" stroke="#fff" stroke-width="2" d="M32 8l2 3 4-5"/></svg></div>
    <div class="pbi"><svg viewBox="0 0 36 36"><path fill="#d79a10" d="M20 0h12v36H20z"/><path fill="#f2c230" d="M13 9h11v27H13z"/><path fill="#fadf70" d="M5 18h12v18H5z"/></svg></div>
  </div>
  <div class="tray">
    <svg class="up" width="20" height="12" viewBox="0 0 20 12" fill="none" stroke="#fff" stroke-width="1.500"><path d="M1 10l9-8.500L19 10"/></svg>
    <svg class="cloud" width="25" height="17" viewBox="0 0 25 17"><path fill="#9a9ca2" d="M6 10a7 7 0 0 1 13-4l2 6z"/><path fill="#c8c9cc" d="M0 11c0-5 5-7 9-4l9 6-12 3c-4 0-6-2-6-5z"/><path fill="#fff" d="M2 15l14-9c5-1 9 2 9 6s-3 4-5 4H5z"/></svg>
    <div class="lang">ENG<br>IN</div>
    <svg class="net" width="98" height="22" viewBox="0 0 98 22" fill="none" stroke="#fff" stroke-width="2"><path stroke="#5a606c" d="M1 8c6-7 18-7 24 0"/><path d="M4 11c5-6 13-6 18 0M7.500 14.500c3-4 8-4 11 0"/><circle cx="13" cy="18" r="2.500" fill="#fff" stroke="none"/><path d="M38 8h4l6-6v18l-6-6h-4zM51 7q3 4 0 8M54 4q5 7 0 14M57 2q7 9 0 18" stroke-width="1.600"/><path d="M76 5h16v13H79" /><path fill="#fff" stroke="none" d="M81 8h9v8h-9zM94 9h4v5h-4zM73 5h9v5q0 3-3 3v6h-3v-6q-3 0-3-3zM74 1h2v4h-2zM78 1h2v4h-2z"/></svg>
    <div class="clock">18:25<br>13-11-2021</div>
  </div>
</footer>
</div>
</body>
</html>
```
FILE: styles.css
```css
* { box-sizing: border-box; }
body { margin: 0; width: 1920px; height: 1080px; overflow: hidden; background: #f3f2f1; color: #252423; font-family: "Open Sans", "Noto Sans", sans-serif; font-stretch: 92%; font-size: 18px; letter-spacing: -0.3px; }
svg { display: block; flex: none; overflow: visible; }
h2, h3 { margin: 0; }
.app { display: flex; flex-direction: column; height: 1080px; }

.titlebar { height: 51px; background: #3b3a38; color: #fff; display: flex; align-items: center; padding-left: 27px; flex: none; }
.quick { margin-top: 3px; }
.doc-name { margin-left: 110px; width: 360px; padding-top: 2px; font-size: 17.5px; letter-spacing: -.2px; }
.search { width: 702px; height: 36px; margin-top: 1px; background: #cdccca; border: 1px solid #dddcda; border-radius: 4px; display: flex; align-items: center; padding-left: 26px; gap: 17px; font-size: 20px; color: #1c2b52; }
.user { margin-left: 247px; width: 110px; font-size: 17.5px; letter-spacing: -.15px; }
.avatar { width: 24px; height: 24px; border-radius: 50%; background: #f3f2f1; }
.winbtns { margin-left: 46px; margin-top: 4px; }

.tabs { height: 54px; flex: none; display: flex; padding: 8px 0 0 34px; font-size: 20.5px; line-height: 32px; color: #323130; position: relative; z-index: 3; background: #f3f2f1; }
.tabs span { white-space: nowrap; }
.t-file { width: 87px; }
.t-home { width: 58px; margin-right: 46px; font-weight: 700; border-bottom: 5px solid #f2c811; height: 39px; color: #201f1e; }
.t-insert { width: 100px; }
.t-model { width: 136px; }
.t-view { width: 91px; }

.ribbon { height: 136px; flex: none; display: flex; box-shadow: 0 1px 3px rgba(0,0,0,.25); position: relative; z-index: 2; }
.group { height: 132px; border-right: 1px solid #c8c6c4; display: flex; flex-direction: column; }
.btns { display: flex; height: 115px; padding-top: 3px; }
.btn { display: flex; flex-direction: column; align-items: center; line-height: 24px; white-space: nowrap; font-size: 17.5px; letter-spacing: -.4px; }
.btn > span { display: flex; align-items: center; justify-content: center; height: 24px; }
.ico { width: 48px; height: 48px; margin-bottom: 3px; }
.dd { width: 6px; height: 6px; border: solid #252423; border-width: 0 2px 2px 0; transform: rotate(45deg); margin: -1px 1px 0 7px; }
.dim { color: #a19f9d; }
.dim .dd { border-color: #a19f9d; margin: 0; }
.glabel { text-align: center; font-size: 14.5px; line-height: 17px; color: #3b3a39; margin-top: 1px; }
.g-clip { width: 241px; }
.g-clip .btn { width: 48px; margin-left: 18px; }
.cliplist { color: #c0bebc; margin: -2px 0 0 11px; font-size: 17.5px; letter-spacing: -.4px; }
.cliplist div { display: flex; align-items: center; gap: 5px; height: 36px; }
.g-data { width: 533px; }
.g-data .btns { display: grid; grid-template-columns: 58px 86px 75px 60px 60px 84px 84px; padding-left: 13px; }
.g-query { width: 175px; }
.g-query .btns { display: grid; grid-template-columns: 87px 62px; padding-left: 11px; }
.g-insert { width: 221px; }
.g-insert .btns { display: grid; grid-template-columns: 58px 62px 73px; padding-left: 13px; }
.g-calc { width: 171px; }
.g-calc .btns { display: grid; grid-template-columns: 73px 74px; padding-left: 12px; }
.g-sens { width: 111px; }
.g-share { width: 88px; }
.g-sens .btns, .g-share .btns { justify-content: center; }
.collapse { margin: 117px 0 0 359px; }

.work { height: 731px; flex: none; display: grid; grid-template-columns: 61px 1490px 48px 273px 48px; grid-template-rows: 679px 52px; }
.rail { grid-row: 1 / 3; padding-top: 1px; }
.rail div { height: 60px; display: flex; align-items: center; justify-content: center; padding-left: 2px; }
.rail .on { border-left: 4px solid #f2c811; padding: 0 3px 0 0; }
.stage { background: #fff; border-top: 2px solid #111; border-left: 1px solid #444; border-right: 1px solid #b3b0ad; border-radius: 4px 0 0 0; padding-left: 142px; overflow: hidden; }
.filters { border-top: 2px solid #111; background: #fff; display: flex; flex-direction: column; align-items: center; padding: 24px 2px 0 0; }
.filters .funnel { margin: 53px 0 0 5px; }
.filters b, .fields b { writing-mode: vertical-rl; font-weight: 600; font-size: 21.5px; line-height: 26px; }
.filters b { margin-top: 18px; margin-left: 1px; }
.viz { grid-row: 1 / 3; border-left: 1px solid #dddbd9; border-right: 1px solid #dddbd9; overflow: hidden; }
.fields { grid-row: 1 / 3; display: flex; flex-direction: column; align-items: center; padding: 26px 1px 0 0; }
.fields b { margin-top: 49px; color: #484644; font-size: 22px; margin-right: 3px; }

.report { position: relative; width: 1203px; height: 672px; box-shadow: 3px 0 8px rgba(0,0,0,.22); }
.wall { position: absolute; inset: 0; width: 1203px; height: 672px; overflow: hidden; }
.upper, .lower { position: relative; display: flex; }
.upper { height: 420px; }
.left { width: 753px; margin: 16px 14px 0 16px; }
.card { background: rgba(12,14,0,.3); border: 1px solid rgba(10,12,20,.62); border-radius: 27px; flex: none; }
.card > svg { width: calc(100% + 2px); height: calc(100% + 2px); margin: -1px; }
.year { height: 79px; text-align: center; padding-top: 9px; color: #fff; font-family: Roboto, sans-serif; }
.year h3 { font-size: 15.5px; font-weight: 500; line-height: 20px; letter-spacing: .2px; padding-left: 3px; }
.slicer { display: grid; grid-template-columns: repeat(4, 171px); gap: 1.5px; margin: 5px 0 0 33px; }
.slicer span { height: 29px; background: #eaeaea; color: #666; font: 12px/29px "Open Sans", sans-serif; }
.slicer .sel { background: #333; color: #fff; }
.kpis { display: flex; height: 111px; padding-top: 16px; align-items: flex-start; margin-left: -1px; }
.k1 { width: 194px; height: 95px; margin-top: 1px; }
.k2 { width: 214px; height: 93px; margin: 2px 0 0 12px; }
.k3 { width: 130px; height: 95px; margin-left: 18px; }
.k4 { width: 167px; height: 96px; margin: 1px 0 0 18px; }
.pies { display: flex; margin: 16px 0 0 1px; }
.pies .card { width: 337px; height: 179px; }
.pies .p2 { width: 338px; margin-left: 39px; }
.region { width: 405px; height: 400px; }
.lower .c1 { width: 390px; height: 228px; margin-left: 25.5px; }
.lower .c2 { width: 372px; height: 228px; margin-left: 37px; }
.lower .c3 { width: 341px; height: 228px; margin-left: 23px; }

svg text { letter-spacing: 0; }
.ttl { font: 500 46px Roboto, sans-serif; font-stretch: 90%; fill: #fff; }
.big { font: 500 148px Roboto, sans-serif; font-stretch: 80%; fill: #fff; }
.big.sm { font-size: 132px; }
.lab { font: 36px "Open Sans", sans-serif; font-stretch: 94%; fill: #fff; }
.lab.b { font-weight: 700; }
.dimmer { fill: #dcdde6; }
.mid { text-anchor: middle; }
.end { text-anchor: end; }
.din { font: 500 29px Roboto, sans-serif; font-stretch: 90%; fill: #c9cbd2; }
.axis { font: 29px Roboto, sans-serif; font-stretch: 90%; fill: #25252c; }
.lead { fill: none; stroke: #a9adc8; stroke-width: 3; opacity: .8; }
.grid { fill: none; stroke: #b4b8c8; stroke-width: 3; stroke-dasharray: 3 12.5; opacity: .75; }
.geo { font: 28px "Open Sans", sans-serif; fill: #6c6c6c; }
.sea { font: 600 25px "Open Sans", sans-serif; fill: #686868; }
.bub { fill: #d64550; fill-opacity: .6; stroke: #c01528; stroke-width: 2.5; }
.cr { font: 600 23px "Open Sans", sans-serif; fill: #fff; }
.lib { font: 600 23px "Liberation Sans", sans-serif; font-weight: 400; }

.vhead { height: 78px; display: flex; justify-content: space-between; padding: 22px 18px 0 19px; color: #484644; }
.vhead h2, .drill { font-weight: 600; font-size: 23px; line-height: 32px; }
.vhead h2 { letter-spacing: -.45px; }
.vhead svg { margin-top: 4px; }
.vgrid { display: grid; grid-template-columns: repeat(6, 42px); grid-auto-rows: 36px; padding: 2px 0 0 9px; height: 249px; border-bottom: 1px solid #dddbd9; }
.vgrid svg { width: 25px; height: 25px; }
.n { fill: #fafafa; stroke: #3b3a39; stroke-width: 3; }
.n.thick { stroke-width: 4; }
.u { fill: #83bdec; stroke: #1668b0; stroke-width: 3.5; }
.g { fill: #c8c6c4; stroke: #797775; stroke-width: 3; }
.k { fill: none; stroke: #252423; stroke-width: 4; }
.l { fill: none; stroke: #3b3a39; stroke-width: 3.5; }
.l.blue { stroke: #1e78b8; }
.l.grey { stroke: #8a8886; }
.vbody { position: relative; height: 404px; padding-left: 7px; color: #3b3a39; font-size: 17.5px; overflow: hidden; }
.vtabs { display: flex; height: 55px; padding-left: 12px; }
.vtabs div { width: 60px; padding: 13px 0 0 15px; height: 55px; }
.vtabs .act { border-bottom: 6px solid #f2c811; border-radius: 0 0 3px 3px; }
.vtabs div + div { padding-left: 16px; }
.vlabel { padding-left: 12px; line-height: 30px; height: 40px; padding-top: 4px; }
.well { width: 255px; height: 42px; border: 1.5px dashed #c8c6c4; border-radius: 2px; background: #fff; line-height: 40px; padding-left: 15px; letter-spacing: -.2px; }
.drill { margin: 21px 0 0 14px; color: #484644; letter-spacing: -.2px; }
.vrow { padding-left: 7px; line-height: 24px; letter-spacing: -.2px; }
.r1 { margin-top: 20px; }
.r2 { margin-top: 29px; }
.tog { display: flex; align-items: center; height: 24px; margin-top: 20px; padding-left: 21px; }
.tog span { width: 30px; margin-top: -2px; }
.cut { margin-top: 19px; }
.scroll { position: absolute; right: 0; top: 53px; width: 9px; height: 320px; border-radius: 5px; background: #d0cecc; }

.pages { grid-column: 2 / 4; grid-row: 2; display: flex; align-items: flex-start; }
.pages > svg { margin: 20px 0 0 9px; }
.page { width: 113px; height: 52px; background: #fff; border-left: 1px solid #999; border-bottom: 5px solid #f2c811; text-align: center; line-height: 53px; font-size: 17px; }
.add { width: 59px; height: 49px; margin-top: 1px; background: #f2c811; display: flex; align-items: center; justify-content: center; }
.status { height: 36px; flex: none; border-top: 1px solid #dddbd9; padding-left: 7px; line-height: 35px; font-size: 17.5px; color: #3b3a39; letter-spacing: 0; }

.taskbar { height: 72px; flex: none; color: #fff; display: flex; background: linear-gradient(90deg, #171d33 0, #141c3c 18%, #11205a 27%, #121e66 34%, #11214f 40%, #11205e 48%, #141d5a 54%, #181c40 60%, #11205a 65%, #132058 69%, #1c2030 74%, #1a2030 82%, #1c222e 100%); }
.apps { width: 1549px; display: grid; grid-template-columns: repeat(15, 66px); padding: 19px 0 0 480px; }
.apps svg { width: 36px; height: 36px; }
.pbi { width: 60px; height: 60px; margin: -12px 0 0 -12px; padding: 12px; border-radius: 6px; background: rgba(255,255,255,.08); border: 1px solid rgba(255,255,255,.06); border-bottom: 0; }
.pbi::after { content: ""; display: block; width: 24px; height: 5px; border-radius: 3px; background: #4cc2ff; margin: 6px 0 0 6px; }
.run::after { content: ""; display: block; width: 9px; height: 5px; border-radius: 3px; background: #9a9cae; margin: 6px 0 0 14px; }
.tray { display: flex; font-size: 16.5px; line-height: 23px; }
.up { margin: 29px 14px 0 0; }
.cloud { margin-top: 28px; }
.lang { width: 60px; margin: 13px 0 0 9px; text-align: center; height: 46px; }
.net { margin: 25px 0 0 13px; }
.clock { margin: 13px 0 0 0; width: 103px; text-align: right; white-space: nowrap; letter-spacing: -.2px; }
```
